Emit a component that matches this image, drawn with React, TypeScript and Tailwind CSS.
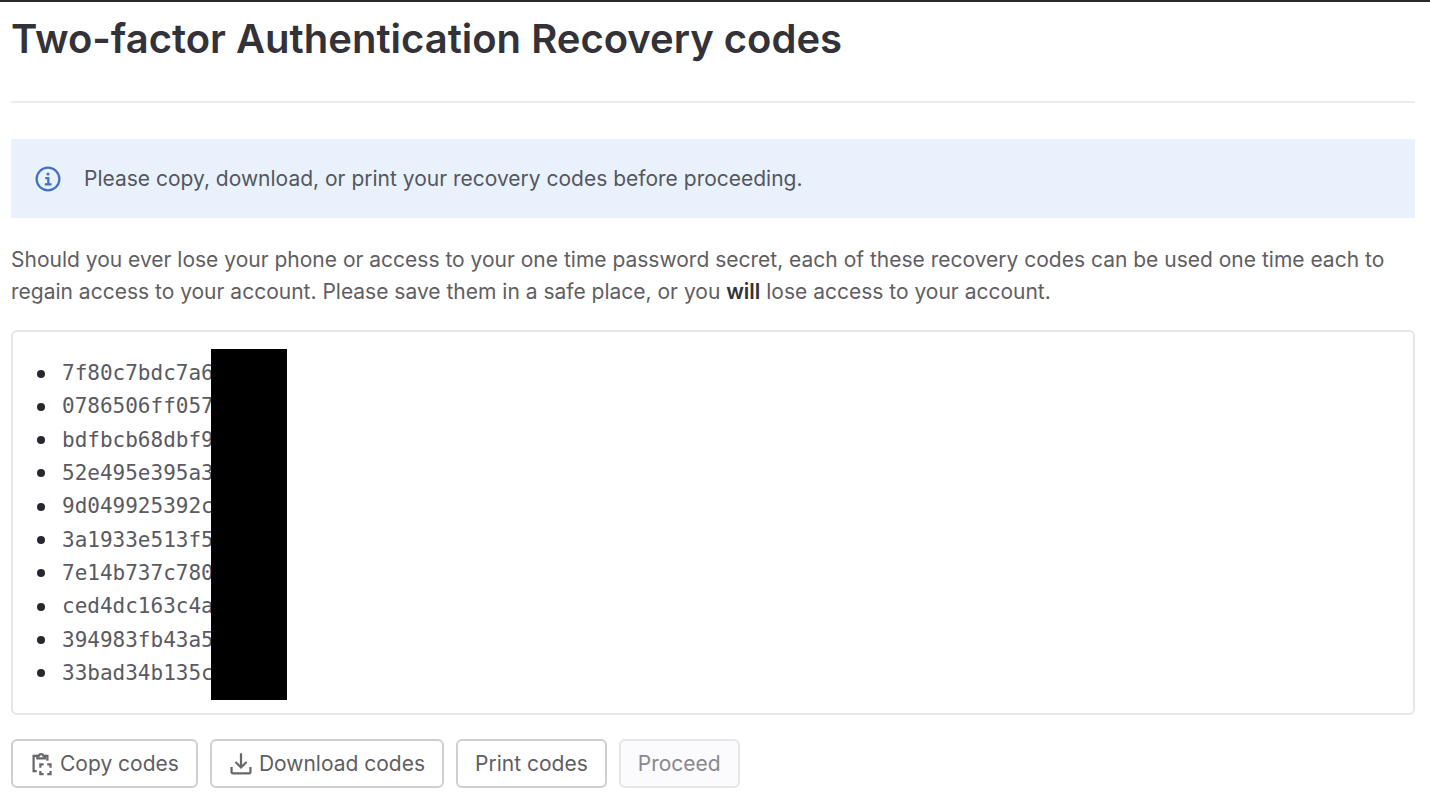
import React from "react";

const recoveryCodes = [
  "7f80c7bdc7a6",
  "0786506ff057",
  "bdfbcb68dbf9",
  "52e495e395a3",
  "9d049925392c",
  "3a1933e513f5",
  "7e14b737c780",
  "ced4dc163c4a",
  "394983fb43a5",
  "33bad34b135c",
];

const InfoIcon: React.FC = () => (
  <svg
    viewBox="0 0 16 16"
    className="w-[26px] h-[26px] shrink-0 text-[#4472c0]"
    fill="none"
    stroke="currentColor"
    strokeWidth="1.4"
    aria-hidden="true"
  >
    <circle cx="8" cy="8" r="7" />
    <path d="M6.3 7.4h1.9v3.7M6 11.3h4.2" />
    <circle cx="8" cy="4.9" r="0.95" fill="currentColor" stroke="none" />
  </svg>
);

const ClipboardIcon: React.FC = () => (
  <svg
    viewBox="0 0 16 16"
    className="size-6 shrink-0 text-[#68676d]"
    fill="none"
    stroke="currentColor"
    strokeWidth="1.5"
    aria-hidden="true"
  >
    <path d="M5 2.5H2.4v10.2h2.1M10 2.5h1.6v3.4" />
    <path d="M4.9 4.2V2.6h.9a1.7 1.7 0 0 1 3.2 0h.9v1.6z" />
    <path d="M6.9 10.5V8.3h2.2M11.5 8.3h2.2v2.2M13.7 12.6v2.2h-2.2M9.1 14.8H6.9v-2.2" />
  </svg>
);

const DownloadIcon: React.FC = () => (
  <svg
    viewBox="0 0 16 16"
    className="size-6 shrink-0 text-[#68676d]"
    fill="none"
    stroke="currentColor"
    strokeWidth="1.5"
    aria-hidden="true"
  >
    <path d="M8 .8v9.4M4.3 6.7 8 10.3l3.7-3.6" />
    <path d="M1.7 10v3.2a1 1 0 0 0 1 1h10.6a1 1 0 0 0 1-1V10" />
  </svg>
);

const buttonClass =
  "flex items-center gap-1.5 h-[49px] px-[17px] rounded-md border-2 border-[#cfcfd1] bg-white text-[#5f5e63] cursor-pointer";

export default function App() {
  return (
    <div className="min-h-screen bg-white border-t-2 border-[#29282d] font-['Inter',sans-serif] text-[21px] leading-8 text-[#5f5e63]">
      <main className="pl-[11px] pr-[15px] pb-4">
        <h1 className="pt-3 pb-[37px] text-[40px] leading-[50px] font-semibold text-[#333238] border-b-2 border-[#ececef]">
          Two-factor Authentication Recovery codes
        </h1>

        <div
          role="status"
          className="mt-9 flex items-center gap-[23px] px-6 pt-6 pb-[23px] bg-[#e9f2fc] text-[#55565e]"
        >
          <InfoIcon />
          <p>Please copy, download, or print your recovery codes before proceeding.</p>
        </div>

        <p className="mt-[26px]">
          Should you ever lose your phone or access to your one time password
          secret, each of these recovery codes can be used one time each to
          regain access to your account. Please save them in a safe place, or
          you <strong className="font-semibold text-[#333238]">will</strong>{" "}
          lose access to your account.
        </p>

        <div className="relative mt-[22px] px-6 pt-[25px] pb-[23px] rounded-md border-2 border-[#e6e6e8]">
          <ul className="flex flex-col justify-between min-h-[333px] leading-[33px] font-['DejaVu_Sans_Mono',monospace] text-[#5a5a62]">
            {recoveryCodes.map((code) => (
              <li
                key={code}
                className="flex items-center gap-[17px] before:size-2 before:rounded-full before:bg-[#28272d]"
              >
                {code}
              </li>
            ))}
          </ul>
          {/* hides the tail of every code */}
          <div className="absolute top-[17px] bottom-[13px] left-[198px] w-[76px] bg-black" />
        </div>

        <div className="mt-6 flex flex-wrap gap-3">
          <button type="button" className={buttonClass}>
            <ClipboardIcon />
            Copy codes
          </button>
          <button type="button" className={buttonClass}>
            <DownloadIcon />
            Download codes
          </button>
          <button type="button" className={buttonClass}>
            Print codes
          </button>
          <button
            type="button"
            disabled
            className="flex items-center h-[49px] px-[17px] rounded-md border-2 border-[#e6e6e8] bg-[#fbfafd] text-[#89888d]"
          >
            Proceed
          </button>
        </div>
      </main>
    </div>
  );
}
